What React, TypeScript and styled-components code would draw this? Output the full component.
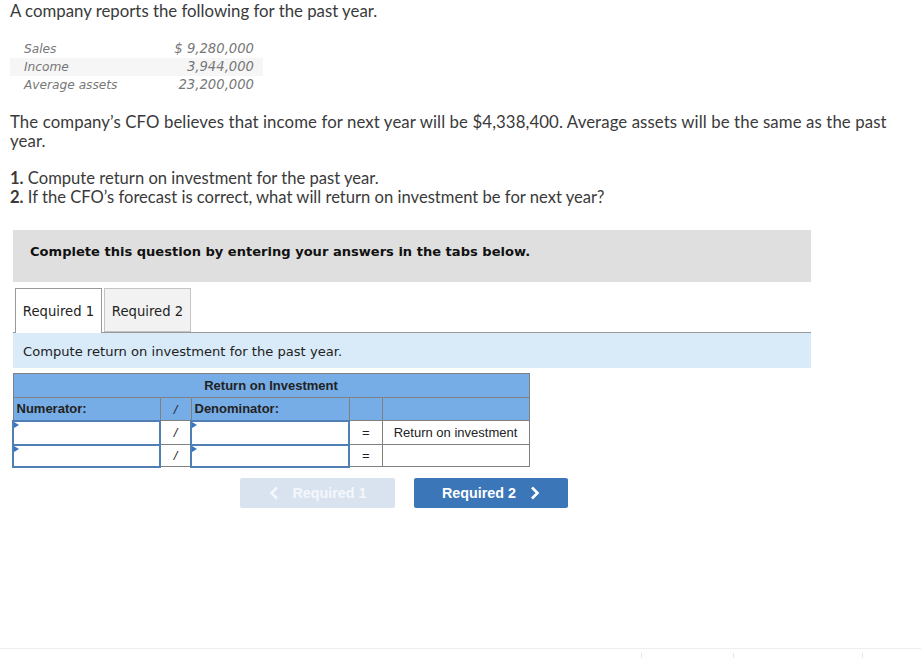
import React from 'react';
import styled, { createGlobalStyle } from 'styled-components';

const GlobalStyle = createGlobalStyle`
  html, body {
    margin: 0;
    padding: 0;
    background: #fff;
  }
  body {
    font-family: Lato, "Open Sans", sans-serif;
    color: #3a3a3a;
  }
`;

const Page = styled.div`
  width: 921px;
  height: 658px;
  overflow: hidden;
  display: flex;
  flex-direction: column;
`;

const Content = styled.div`
  flex: 1;
  padding-left: 10px;
`;

const Para = styled.p<{ $top?: number; $track?: number }>`
  margin: ${(p) => p.$top ?? 0}px 0 0;
  font-size: 16.8px;
  line-height: 19px;
  width: 885px;
  letter-spacing: ${(p) => p.$track ?? 0}px;
`;

const FigureTable = styled.div`
  margin: 20px 0 0 0;
  width: 253px;
  font-family: "DejaVu Sans", sans-serif;
  font-style: italic;
  font-size: 12.2px;
  color: #777;
`;

const FigureRow = styled.div<{ $shade?: boolean }>`
  display: flex;
  justify-content: space-between;
  height: 18px;
  line-height: 18px;
  padding: 0 9px 0 14px;
  background: ${(p) => (p.$shade ? '#f6f6f6' : 'transparent')};
`;

const FigureValue = styled.span`
  font-size: 13.2px;
`;

const Steps = styled.div`
  margin-top: 19px;
  font-size: 16.6px;
  line-height: 19px;
`;

const StepNo = styled.b`
  font-weight: 700;
`;

const Notice = styled.div`
  margin: 23px 0 0 3px;
  width: 798px;
  height: 52px;
  background: #dfdfdf;
  padding-left: 17px;
  box-sizing: border-box;
  font-family: "DejaVu Sans", sans-serif;
  font-weight: 700;
  font-size: 13.05px;
  line-height: 43px;
  color: #111;
`;

const Tabs = styled.div`
  margin: 6px 0 0 3px;
  width: 798px;
  display: flex;
  gap: 2px;
  padding-left: 2px;
  box-sizing: border-box;
  border-bottom: 1px solid #999;
`;

const Tab = styled.div<{ $active?: boolean }>`
  box-sizing: border-box;
  margin-bottom: ${(p) => (p.$active ? '-1px' : '0')};
  height: ${(p) => (p.$active ? '45px' : '44px')};
  width: 87px;
  text-align: center;
  border: 1px solid ${(p) => (p.$active ? '#999' : '#c4c4c4')};
  border-bottom: ${(p) => (p.$active ? 'none' : '1px solid #c4c4c4')};
  background: ${(p) => (p.$active ? '#fff' : '#f2f2f2')};
  font-family: "DejaVu Sans", sans-serif;
  font-size: 13.2px;
  line-height: 45px;
  color: #222;
`;

const Instruction = styled.div`
  margin-left: 3px;
  width: 798px;
  height: 35px;
  background: #d9eaf9;
  padding-left: 10px;
  box-sizing: border-box;
  font-family: "DejaVu Sans", sans-serif;
  font-size: 13.1px;
  line-height: 37px;
  color: #222;
`;

const Sheet = styled.table`
  margin: 5px 0 0 2px;
  width: 516px;
  table-layout: fixed;
  border-collapse: collapse;
  font-family: "Liberation Sans", Arial, sans-serif;
  font-size: 13px;
  color: #222;

  td, th {
    border: 1px solid #808080;
    padding: 0;
    box-sizing: border-box;
  }
`;

const HeadRow = styled.tr<{ $h: number }>`
  height: ${(p) => p.$h}px;
  background: #77ade6;
`;

const TitleCell = styled.th`
  font-weight: 700;
  text-align: center;
  padding-bottom: 1px !important;
`;

const LabelCell = styled.th`
  font-weight: 700;
  text-align: left;
  padding-left: 3px !important;
`;

const SymbolCell = styled.td<{ $italic?: boolean }>`
  text-align: center;
  font-style: ${(p) => (p.$italic ? 'italic' : 'normal')};
`;

const TextCell = styled.td`
  text-align: center;
`;

const BodyRow = styled.tr<{ $h: number }>`
  height: ${(p) => p.$h}px;
`;

const InputCell = styled.td`
  position: relative;
  border: 2px solid #4f7fb5 !important;
  background: #fff;

  &::before {
    content: '';
    position: absolute;
    left: 0;
    top: 0;
    border-left: 5px solid #3a76bb;
    border-top: 3px solid transparent;
    border-bottom: 3px solid transparent;
  }
`;

const Nav = styled.div`
  margin: 10px 0 0 230px;
  display: flex;
  gap: 19px;
`;

const NavButton = styled.div<{ $off?: boolean; $w: number }>`
  width: ${(p) => p.$w}px;
  height: 30px;
  border-radius: 2px;
  background: ${(p) => (p.$off ? '#d9e3f0' : '#3b76b9')};
  color: ${(p) => (p.$off ? '#f4f7fb' : '#fff')};
  display: flex;
  align-items: center;
  justify-content: center;
  gap: 14px;
  font-family: "Liberation Sans", Arial, sans-serif;
  font-weight: 700;
  font-size: 14.3px;
`;

const Footer = styled.div`
  height: 10px;
  border-top: 1px solid #eee;
  display: flex;
  padding: 4px 0 0 641px;
  box-sizing: border-box;
`;

const Tick = styled.span<{ $w: number }>`
  width: ${(p) => p.$w}px;
  height: 6px;
  border-left: 1px solid #e6e6e6;
`;

const Chevron = ({ dir }: { dir: 'left' | 'right' }) => (
  <svg width="10" height="14" viewBox="0 0 10 14" fill="none" stroke="currentColor" strokeWidth="2.6">
    <path d={dir === 'left' ? 'M8 1.5 2.5 7 8 12.5' : 'M2 1.5 7.5 7 2 12.5'} />
  </svg>
);

const figures = [
  { name: 'Sales', value: '$ 9,280,000' },
  { name: 'Income', value: '3,944,000', shade: true },
  { name: 'Average assets', value: '23,200,000' },
];

export default function App() {
  return (
    <Page>
      <GlobalStyle />
      <Content>
        <Para $top={1}>A company reports the following for the past year.</Para>
        <FigureTable>
          {figures.map((f) => (
            <FigureRow key={f.name} $shade={f.shade}>
              <span>{f.name}</span>
              <FigureValue>{f.value}</FigureValue>
            </FigureRow>
          ))}
        </FigureTable>
        <Para $top={18} $track={0.1}>
          The company’s CFO believes that income for next year will be $4,338,400. Average assets will be the same as the past year.
        </Para>
        <Steps>
          <div><StepNo>1.</StepNo> Compute return on investment for the past year.</div>
          <div><StepNo>2.</StepNo> If the CFO’s forecast is correct, what will return on investment be for next year?</div>
        </Steps>
        <Notice>Complete this question by entering your answers in the tabs below.</Notice>
        <Tabs>
          <Tab $active>Required 1</Tab>
          <Tab>Required 2</Tab>
        </Tabs>
        <Instruction>Compute return on investment for the past year.</Instruction>
        <Sheet>
          <colgroup>
            <col width="147" />
            <col width="31" />
            <col width="158" />
            <col width="33" />
            <col width="147" />
          </colgroup>
          <tbody>
            <HeadRow $h={24}>
              <TitleCell colSpan={5}>Return on Investment</TitleCell>
            </HeadRow>
            <HeadRow $h={23}>
              <LabelCell>Numerator:</LabelCell>
              <SymbolCell $italic>/</SymbolCell>
              <LabelCell>Denominator:</LabelCell>
              <SymbolCell />
              <SymbolCell />
            </HeadRow>
            <BodyRow $h={24}>
              <InputCell />
              <SymbolCell $italic>/</SymbolCell>
              <InputCell />
              <SymbolCell>=</SymbolCell>
              <TextCell>Return on investment</TextCell>
            </BodyRow>
            <BodyRow $h={22}>
              <InputCell />
              <SymbolCell $italic>/</SymbolCell>
              <InputCell />
              <SymbolCell>=</SymbolCell>
              <TextCell />
            </BodyRow>
          </tbody>
        </Sheet>
        <Nav>
          <NavButton $off $w={155}>
            <Chevron dir="left" />
            Required 1
          </NavButton>
          <NavButton $w={154}>
            Required 2
            <Chevron dir="right" />
          </NavButton>
        </Nav>
      </Content>
      <Footer>
        <Tick $w={91} />
        <Tick $w={128} />
        <Tick $w={10} />
      </Footer>
    </Page>
  );
}
